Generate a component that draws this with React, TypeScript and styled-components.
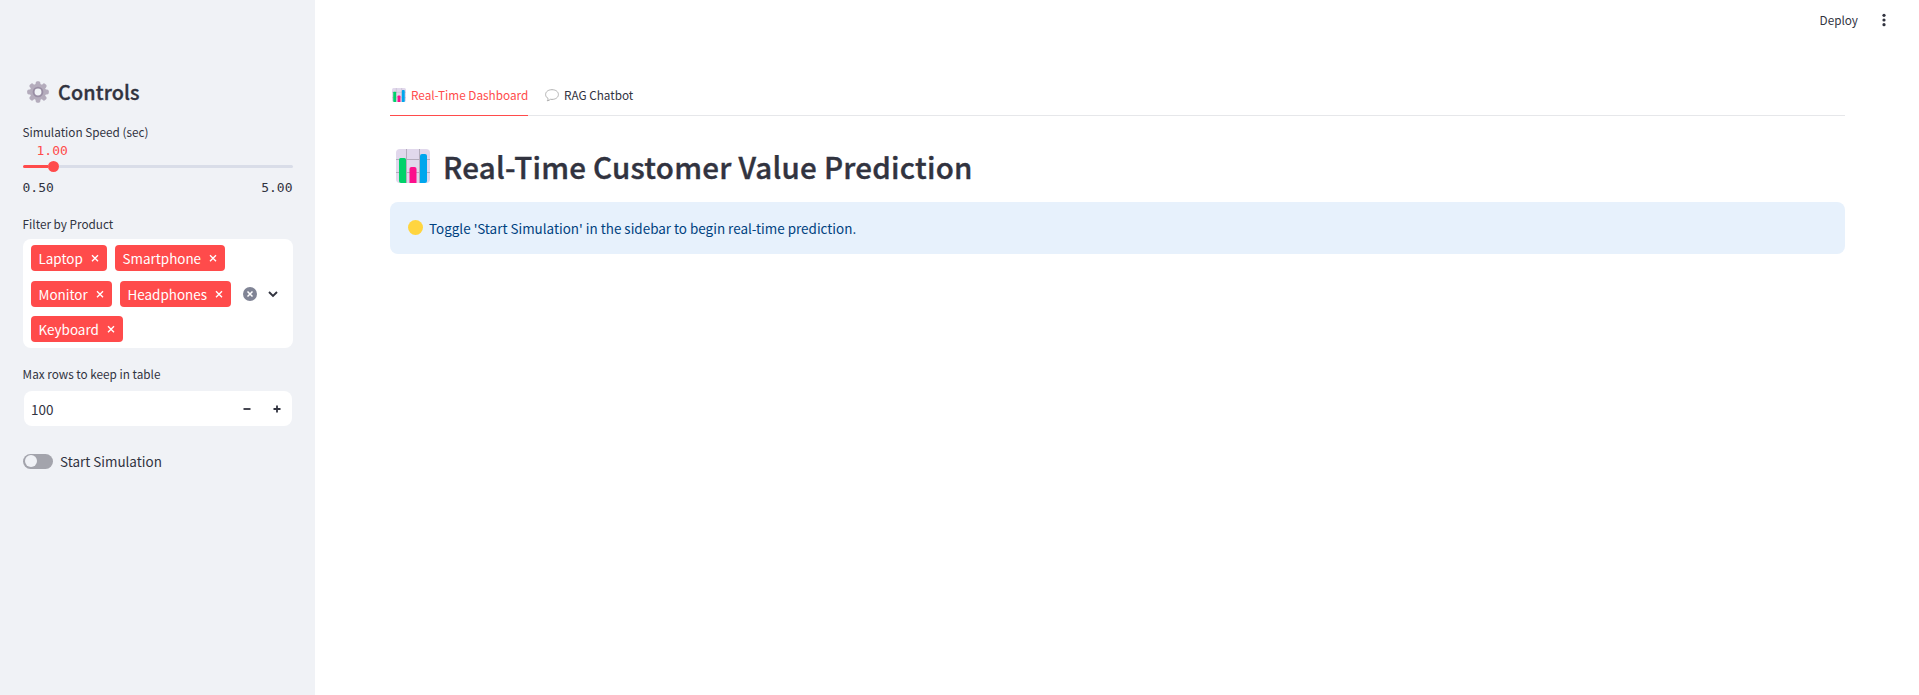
import React from "react";
import styled, { createGlobalStyle } from "styled-components";

const sans = `"Noto Sans CJK SC", "Open Sans", sans-serif`;
const mono = `"DejaVu Sans Mono", monospace`;
const ink = "#31333f";
const red = "#ff4b4b";

const GlobalStyle = createGlobalStyle`
  *, *::before, *::after { box-sizing: border-box; }
  body { margin: 0; background: #fff; color: ${ink}; font-family: ${sans}; font-size: 13.45px; }
  h1, h2 { margin: 0; }
  button { font: inherit; border: 0; background: none; padding: 0; color: inherit; }
  svg { display: block; flex: none; }
`;

const Page = styled.div`
  display: flex;
  height: 695px;
`;

const Sidebar = styled.aside`
  width: 315px;
  flex: none;
  background: #f0f2f6;
  padding: 76px 22px 0 23px;
`;

const SidebarTitle = styled.h2`
  display: flex;
  align-items: center;
  gap: 9px;
  height: 32px;
  padding-left: 4px;
  font-size: 19.8px;
  font-weight: 500;
  line-height: 32px;
  letter-spacing: 0.15px;
  -webkit-text-stroke: 0.35px ${ink};
`;

const Label = styled.div<{ $top: number }>`
  margin-top: ${(p) => p.$top}px;
  margin-left: -0.4px;
  height: 22px;
  font-size: 11.75px;
  line-height: 22px;
  white-space: nowrap;
`;

const Value = styled.div`
  height: 14px;
  padding-left: 13.5px;
  font-family: ${mono};
  font-size: 13px;
  line-height: 15px;
  color: ${red};
`;

const Track = styled.div`
  display: flex;
  align-items: center;
  height: 12px;
  margin-top: 3px;
`;

const Filled = styled.div`
  width: 24.5px;
  height: 3px;
  border-radius: 2px 0 0 2px;
  background: ${red};
`;

const Thumb = styled.div`
  width: 11px;
  height: 11px;
  border-radius: 50%;
  background: ${red};
`;

const Rest = styled.div`
  flex: 1;
  height: 3px;
  border-radius: 0 2px 2px 0;
  background: #d9dde8;
`;

const Range = styled.div`
  display: flex;
  justify-content: space-between;
  margin: 5px 0.5px 0 -0.5px;
  height: 22px;
  font-family: ${mono};
  font-size: 13px;
  line-height: 22px;
`;

const MultiSelect = styled.div`
  display: flex;
  align-items: center;
  height: 109px;
  margin-top: 4px;
  border-radius: 8px;
  background: #fff;
`;

const Tags = styled.div`
  display: flex;
  flex-wrap: wrap;
  flex: 1;
  gap: 9.6px 8px;
  padding-left: 8px;
`;

const Tag = styled.span<{ $w: number }>`
  display: flex;
  align-items: center;
  justify-content: space-between;
  width: ${(p) => p.$w}px;
  height: 26px;
  padding: 0 8.5px 0 7.5px;
  border-radius: 4px;
  background: ${red};
  color: #fff;
  line-height: 26px;
`;

const SelectActions = styled.div`
  display: flex;
  align-items: center;
  gap: 11px;
  padding: 1px 15px 0 0;
`;

const NumberBox = styled.div`
  display: flex;
  align-items: center;
  height: 35px;
  margin: 6px 1px 0;
  padding: 0 11.5px 0 7px;
  border-radius: 8px;
  background: #fff;
`;

const NumberText = styled.span`
  flex: 1;
  line-height: 36px;
`;

const Steps = styled.div`
  display: flex;
  gap: 22px;
`;

const ToggleRow = styled.div`
  display: flex;
  align-items: center;
  gap: 7px;
  height: 24px;
  margin-top: 23px;
  line-height: 24px;
`;

const Toggle = styled.div`
  width: 30px;
  height: 15px;
  padding: 1.5px;
  border-radius: 8px;
  background: #a3a4ac;

  &::before {
    content: "";
    display: block;
    width: 12px;
    height: 12px;
    border-radius: 50%;
    background: #f0f2f6;
  }
`;

const Main = styled.main`
  flex: 1;
  display: flex;
  flex-direction: column;
`;

const Toolbar = styled.header`
  display: flex;
  justify-content: flex-end;
  align-items: center;
  gap: 19px;
  height: 40px;
  padding-right: 28px;
  font-size: 11.77px;
  line-height: 20px;
`;

const Content = styled.section`
  padding: 36px 74px 0 75px;
`;

const TabList = styled.nav`
  display: flex;
  gap: 15px;
  height: 40px;
  box-shadow: inset 0 -1px #e6e7ea;
`;

const Tab = styled.button<{ $active?: boolean; $w: number }>`
  display: flex;
  align-items: center;
  gap: 5px;
  width: ${(p) => p.$w}px;
  padding: 0 0 2px 2px;
  font-size: 11.75px;
  line-height: 20px;
  white-space: nowrap;
  color: ${(p) => (p.$active ? red : ink)};
  box-shadow: ${(p) => (p.$active ? `inset 0 -1px ${red}` : "none")};
`;

const Title = styled.h1`
  display: flex;
  align-items: center;
  gap: 13px;
  height: 54px;
  margin-top: 23px;
  padding-left: 6px;
  font-size: 29.5px;
  font-weight: 500;
  line-height: 52px;
  letter-spacing: 0.25px;
  white-space: nowrap;
  -webkit-text-stroke: 0.4px ${ink};
`;

const Alert = styled.div`
  display: flex;
  align-items: center;
  gap: 6px;
  height: 52px;
  margin-top: 9px;
  padding: 0 0 1px 18px;
  border-radius: 8px;
  background: #e7f1fc;
  color: #004280;
`;

const Dot = styled.span`
  width: 15px;
  height: 15px;
  border-radius: 50%;
  background: #ffd53f;
`;

const ChartIcon = ({ size }: { size: number }) => (
  <svg width={size} height={size} viewBox="0 0 34 34">
    <rect width="34" height="34" rx="4" fill="#e1d8ec" />
    <path d="M10.5 0v34M23.5 0v34M0 10.5h34M0 23.5h34" stroke="#b4acbc" strokeWidth="1" />
    <path d="M3 10.500q0-1.500 1.500-1.500h4Q10 9 10 10.500V34H5q-2 0-2-2z" fill="#00d26a" />
    <path d="M13.500 20q0-2 2-2h3q2 0 2 2v14h-7z" fill="#fc0f8c" />
    <path d="M24 7q0-2 2-2h3q2 0 2 2v25q0 2-2 2h-5z" fill="#00a6ed" />
  </svg>
);

const GearIcon = () => (
  <svg width="22" height="22" viewBox="0 0 23 23">
    <g fill="#b4acbc">
      {[0, 45, 90, 135].map((a) => (
        <rect key={a} x="9" y="0.200" width="5" height="22.600" rx="1.800" transform={`rotate(${a} 11.500 11.500)`} />
      ))}
      <circle cx="11.500" cy="11.500" r="8.500" />
    </g>
    <circle cx="11.500" cy="11.500" r="4.600" fill="#f0f2f6" stroke="#998ea4" strokeWidth="2" />
  </svg>
);

const BubbleIcon = () => (
  <svg width="14" height="13" viewBox="0 0 14 13">
    <path d="M7 .700C3.300.700.600 2.700.600 5.500c0 1.700 1 3.100 2.500 4 .1.900-.3 1.700-.9 2.300 1.300-.1 2.400-.6 3.200-1.500.5.100 1 .1 1.600.1 3.700 0 6.400-2.100 6.400-4.900S10.700.700 7 .700z" fill="#fff" stroke="#b0b0b0" strokeWidth="1" />
  </svg>
);

const Cross = () => (
  <svg width="8" height="8" viewBox="0 0 8 8">
    <path d="M1 1.200l6 6M7 1.200l-6 6" stroke="#fff" strokeWidth="1.400" />
  </svg>
);

const products = [
  { name: "Laptop", width: 76 },
  { name: "Smartphone", width: 110 },
  { name: "Monitor", width: 81 },
  { name: "Headphones", width: 111 },
  { name: "Keyboard", width: 92 },
];

export default function App() {
  return (
    <Page>
      <GlobalStyle />
      <Sidebar>
        <SidebarTitle><GearIcon />Controls</SidebarTitle>
        <Label $top={13}>Simulation Speed (sec)</Label>
        <Value>1.00</Value>
        <Track><Filled /><Thumb /><Rest /></Track>
        <Range><span>0.50</span><span>5.00</span></Range>
        <Label $top={14}>Filter by Product</Label>
        <MultiSelect>
          <Tags>
            {products.map((p) => (
              <Tag key={p.name} $w={p.width}>{p.name}<Cross /></Tag>
            ))}
          </Tags>
          <SelectActions>
            <svg width="14" height="14" viewBox="0 0 14 14">
              <circle cx="7" cy="7" r="7" fill="#808495" />
              <path d="M4.500 4.500l5 5M9.500 4.500l-5 5" stroke="#fff" strokeWidth="1.500" />
            </svg>
            <svg width="10" height="7" viewBox="0 0 10 7">
              <path d="M1 1l4 4 4-4" fill="none" stroke={ink} strokeWidth="1.900" />
            </svg>
          </SelectActions>
        </MultiSelect>
        <Label $top={15}>Max rows to keep in table</Label>
        <NumberBox>
          <NumberText>100</NumberText>
          <Steps>
            <svg width="8" height="8" viewBox="0 0 8 8"><path d="M.500 4h7" stroke={ink} strokeWidth="1.800" /></svg>
            <svg width="8" height="8" viewBox="0 0 8 8"><path d="M.500 4h7M4 .500v7" stroke={ink} strokeWidth="1.800" /></svg>
          </Steps>
        </NumberBox>
        <ToggleRow><Toggle />Start Simulation</ToggleRow>
      </Sidebar>
      <Main>
        <Toolbar>
          <span>Deploy</span>
          <svg width="14" height="14" viewBox="0 0 14 14" fill={ink}>
            <circle cx="7" cy="2.300" r="1.600" /><circle cx="7" cy="7" r="1.600" /><circle cx="7" cy="11.700" r="1.600" />
          </svg>
        </Toolbar>
        <Content>
          <TabList>
            <Tab $active $w={138}><ChartIcon size={14} />Real-Time Dashboard</Tab>
            <Tab $w={90}><BubbleIcon />RAG Chatbot</Tab>
          </TabList>
          <Title><ChartIcon size={34} />Real-Time Customer Value Prediction</Title>
          <Alert><Dot />Toggle 'Start Simulation' in the sidebar to begin real-time prediction.</Alert>
        </Content>
      </Main>
    </Page>
  );
}
